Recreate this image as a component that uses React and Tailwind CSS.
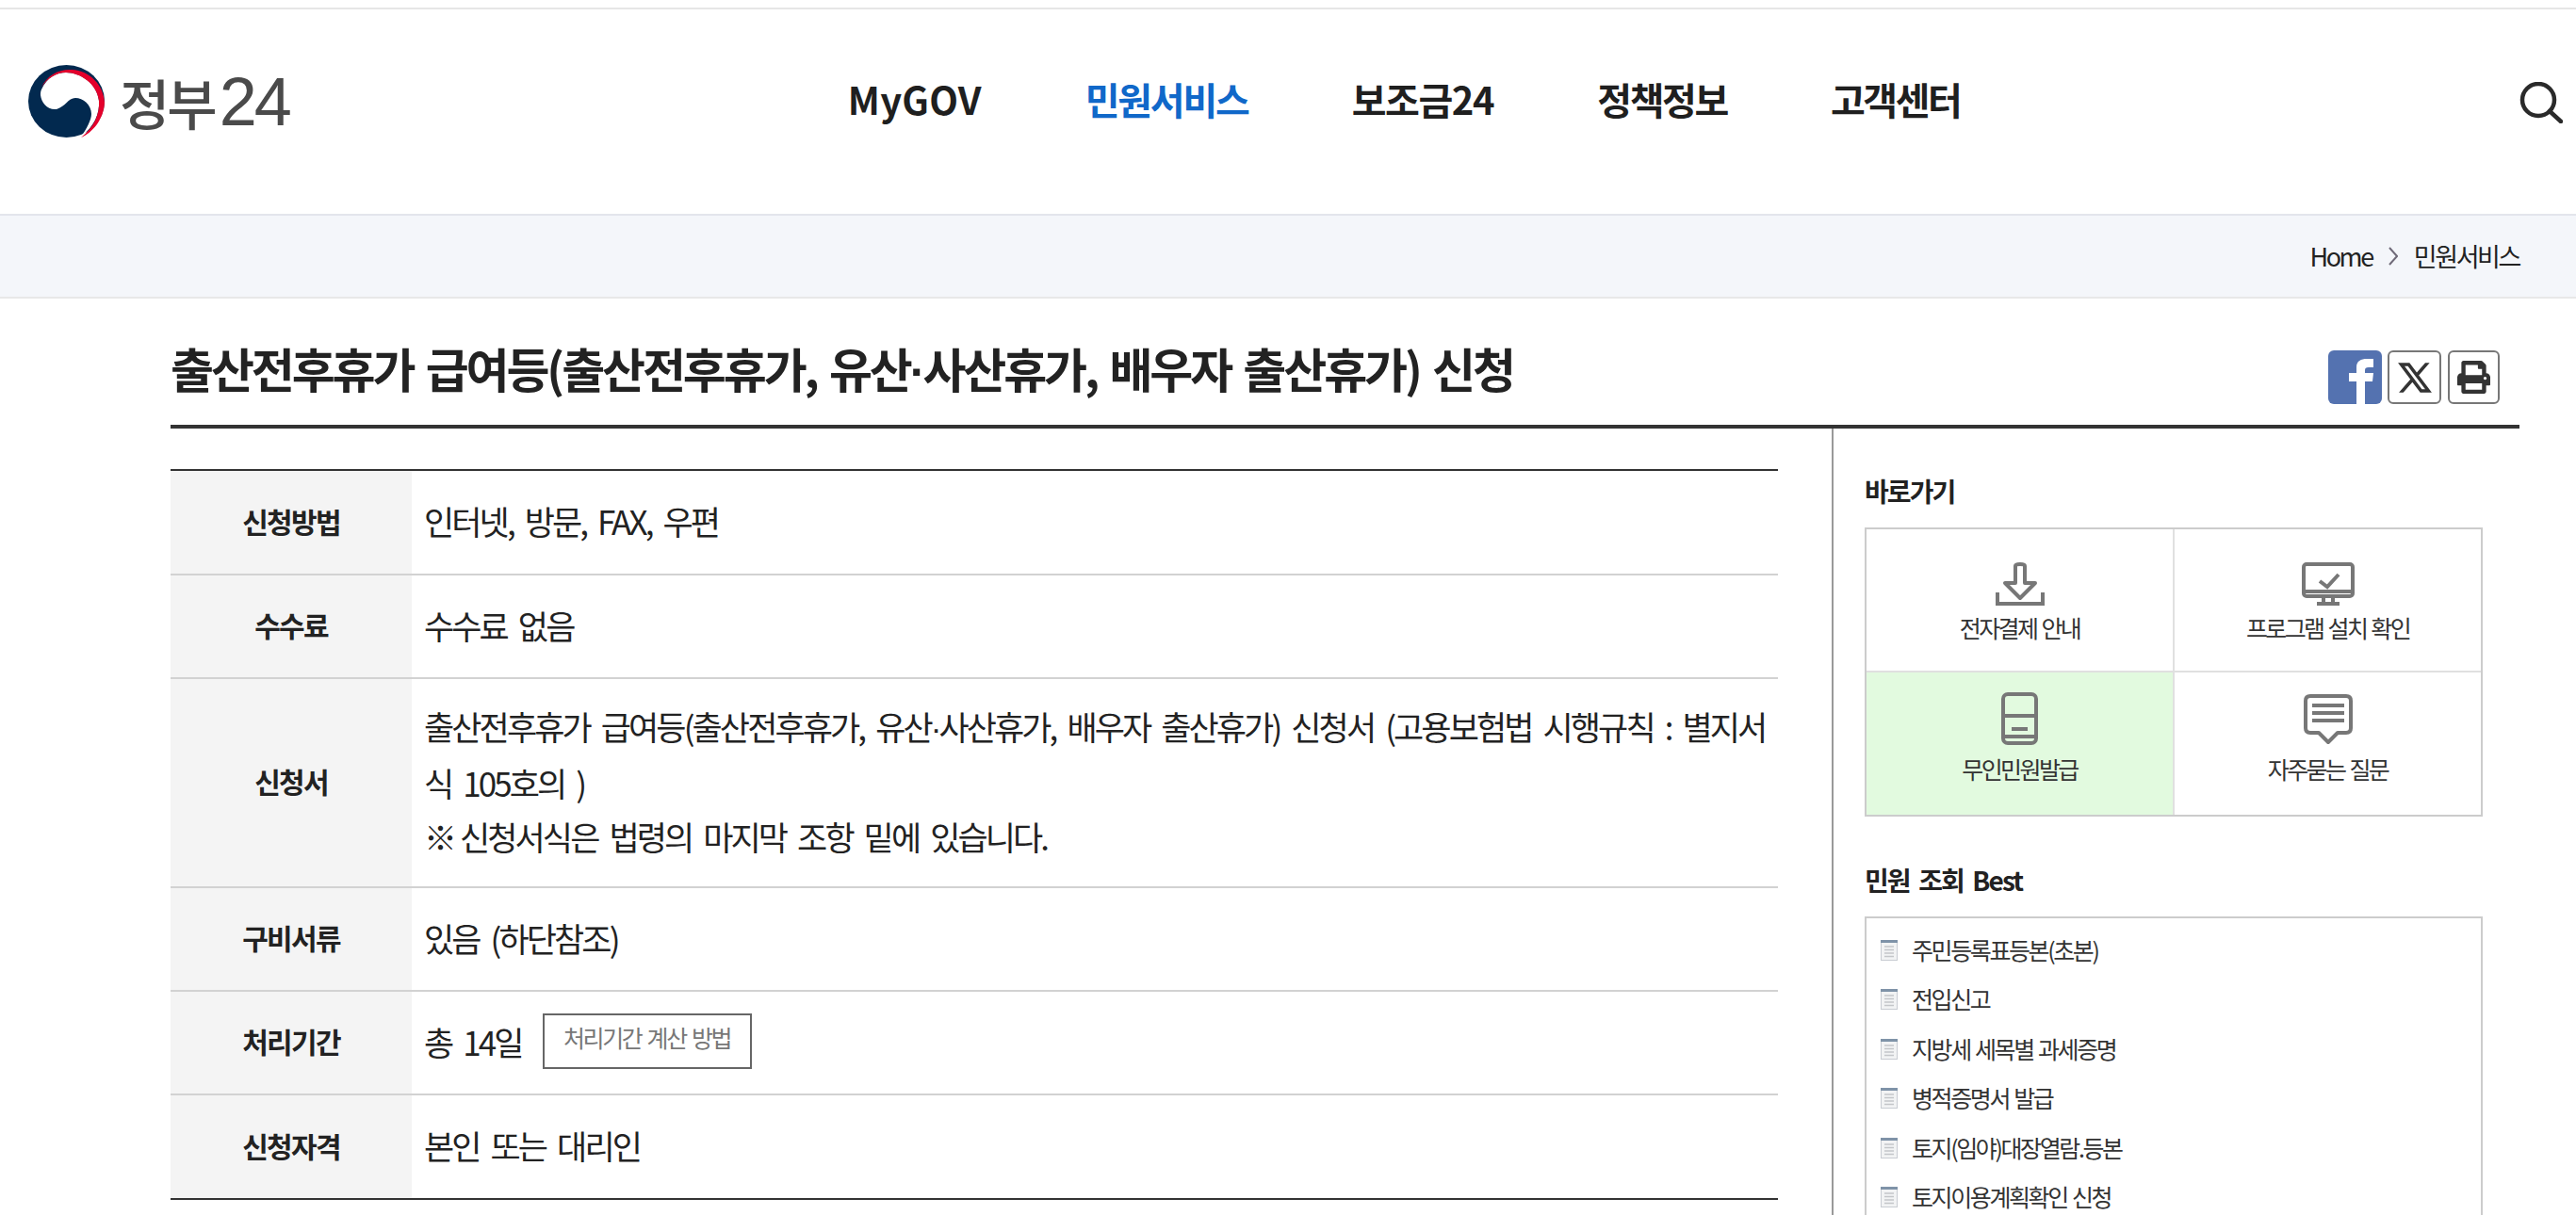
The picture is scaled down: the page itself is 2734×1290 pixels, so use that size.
import { FaPrint } from "react-icons/fa";
import { RiTwitterXLine } from "react-icons/ri";

const navItems = [
    { label: "MyGOV", className: "tracking-[0.2px] text-[#1f1f1f]" },
    { label: "민원서비스", className: "tracking-[-2.2px] text-[#1068c9]" },
    { label: "보조금24", className: "tracking-[-1.4px] text-[#1f1f1f]" },
    { label: "정책정보", className: "tracking-[-2.4px] text-[#1f1f1f]" },
    { label: "고객센터", className: "tracking-[-2.4px] text-[#1f1f1f]" },
];

const rows = [
    { label: "신청방법", height: "h-[111px]", body: "인터넷, 방문, FAX, 우편" },
    { label: "수수료", height: "h-[110px]", body: "수수료 없음" },
    {
        label: "신청서",
        height: "h-[222px]",
        body: (
            <>
                출산전후휴가 급여등(출산전후휴가, 유산<span className="font-['Liberation_Sans',sans-serif] tracking-[-3px]">·</span>사산휴가, 배우자 출산휴가) 신청서 (고용보험법 시행규칙 : 별지서
                <br />
                식 105호의 )
                <br />
                <span className="tracking-[-9px]">※</span> 신청서식은 법령의 마지막 조항 밑에 있습니다.
            </>
        ),
    },
    { label: "구비서류", height: "h-[110px]", body: "있음 (하단참조)" },
    {
        label: "처리기간",
        height: "h-[110px]",
        body: (
            <div className="flex items-center">
                <span>총 14일</span>
                <span className="ml-[22px] h-[59px] w-[222px] border-2 border-[#666] pt-[6px] text-center text-[25px] leading-[34px] tracking-[-2.4px] text-[#777] [word-spacing:3px]">
                    처리기간 계산 방법
                </span>
            </div>
        ),
    },
    { label: "신청자격", height: "h-[111px]", body: "본인 또는 대리인" },
];

const bestList = [
    "주민등록표등본(초본)",
    "전입신고",
    "지방세 세목별 과세증명",
    "병적증명서 발급",
    "토지(임야)대장열람.등본",
    "토지이용계획확인 신청",
];

function Logo() {
    return (
        <div className="flex items-center">
            <svg width="81" height="77" viewBox="0 0 81 77">
                <ellipse cx="40.5" cy="38.5" rx="40.5" ry="38.5" fill="#02294f" />
                <path
                    d="M14 26C20 13 30 8 40 8C56 8 73 20 75 38C76 52 70 65 56 76C62 68 67 58 67 52C67 42 58 35 50 35C42 35 40 44 30 47C20 48 14 40 13 32C13 30 13 28 14 26Z"
                    fill="#fff"
                />
                <path
                    d="M14 24C20 10 34 4 46 5C66 6 80 22 81 40C80 58 68 72 56 77C70 66 76 52 75 38C73 20 55 8 40 8C30 8 20 14 14 24Z"
                    fill="#e4002b"
                />
            </svg>
            <div className="ml-[16px] flex items-center text-[#4a4a4a]">
                <span className="text-[58px] leading-none font-medium tracking-[-3px]">정부</span>
                <span className="ml-[5px] font-['Liberation_Sans',sans-serif] text-[72px] leading-none tracking-[-3px]">24</span>
            </div>
        </div>
    );
}

function SearchIcon() {
    return (
        <svg width="46" height="44" viewBox="0 0 46 44" fill="none" stroke="#2a2a2a" strokeWidth="4.5">
            <circle cx="20" cy="19" r="17" />
            <path d="M32 31L44 42" strokeLinecap="round" />
        </svg>
    );
}

function DownloadIcon() {
    return (
        <svg width="52" height="46" viewBox="0 0 52 46" fill="none" stroke="#777" strokeWidth="4">
            <path d="M21 22V4Q21 2 26 2Q31 2 31 4V22H42L26 38L10 22Z" strokeLinejoin="round" />
            <path d="M2 32V44H50V32" />
        </svg>
    );
}

function MonitorIcon() {
    return (
        <svg width="56" height="46" viewBox="0 0 56 46" fill="none" stroke="#777" strokeWidth="4">
            <rect x="2" y="2" width="52" height="34" rx="3" />
            <path d="M2 31H54M19 20L27 26L39 13" />
            <path d="M23 37V44M33 37V44M16 44H40" />
        </svg>
    );
}

function KioskIcon() {
    return (
        <svg width="39" height="56" viewBox="0 0 39 56" fill="none" stroke="#777" strokeWidth="4">
            <rect x="2" y="2" width="35" height="52" rx="5" />
            <path d="M2 25H37M11 39H28M2 47H37" />
        </svg>
    );
}

function ChatIcon() {
    return (
        <svg width="52" height="54" viewBox="0 0 52 54" fill="none" stroke="#777" strokeWidth="4">
            <path d="M7 2H45Q50 2 50 7V36Q50 41 45 41H36L26 51L16 41H7Q2 41 2 36V7Q2 2 7 2Z" strokeLinejoin="round" />
            <path d="M9 12H43M9 20H43M9 28H43" />
        </svg>
    );
}

function DocIcon() {
    return (
        <svg width="18" height="22" viewBox="0 0 18 22" className="mt-[3px] shrink-0">
            <rect width="18" height="22" fill="#c8ccd2" />
            <rect x="1" y="3" width="16" height="18" fill="#f2f3f4" />
            <rect width="18" height="3" fill="#7f93a8" />
            <path d="M4 7H14M4 10.5H14M4 14H14M4 17.5H14" stroke="#c4c6c9" strokeWidth="1.5" />
        </svg>
    );
}

function ShortcutCell({ icon, label, className, labelClass }) {
    return (
        <div className={`flex flex-col items-center ${className}`}>
            <div className="flex h-[56px] items-end">{icon}</div>
            <p className={`${labelClass} text-[25px] leading-[30px] tracking-[-2.6px] text-[#333] [word-spacing:2px]`}>{label}</p>
        </div>
    );
}

export default function App() {
    return (
        <div className="h-[1290px] w-full overflow-hidden bg-white font-['Noto_Sans_CJK_KR','Liberation_Sans',sans-serif] text-[#222]">
            <div className="h-[10px] border-b-2 border-[#e6e6e6]" />

            <header className="flex h-[217px] items-center pr-[14px] pb-[22px] pl-[30px]">
                <Logo />
                <nav className="mb-[5px] ml-[593px] flex gap-[110px] text-[40px] leading-none font-bold">
                    {navItems.map((item) => (
                        <a key={item.label} className={item.className}>
                            {item.label}
                        </a>
                    ))}
                </nav>
                <div className="ml-auto pt-[2px]">
                    <SearchIcon />
                </div>
            </header>

            <div className="flex h-[90px] items-center justify-end border-t-2 border-b-2 border-t-[#e3e5ec] border-b-[#e8e8e8] bg-[#f4f6fa] pr-[60px] text-[27px] tracking-[-2.4px] text-[#222]">
                <span>Home</span>
                <svg width="10" height="20" viewBox="0 0 10 20" fill="none" stroke="#6f6a78" strokeWidth="2" className="mx-[17px]">
                    <path d="M1 1L9 10L1 19" />
                </svg>
                <span>민원서비스</span>
            </div>

            <div className="ml-[181px] mr-[60px]">
                <div className="flex h-[138px] justify-between border-b-4 border-[#333]">
                    <h1 className="pt-[40px] text-[50px] leading-[66px] font-bold tracking-[-3.1px] text-[#222] [word-spacing:5px]">
                        출산전후휴가 급여등(출산전후휴가, 유산<span className="font-['Liberation_Sans',sans-serif] tracking-[-3px]">·</span>사산휴가, 배우자 출산휴가) 신청
                    </h1>
                    <div className="flex pt-[55px] pr-[21px]">
                        <div className="h-[57px] w-[57px] rounded-md bg-[#5472b0]">
                            <svg width="57" height="57" viewBox="0 0 57 57">
                                <path d="M30 57V33H22V24H30V18C30 11 35 9 41 9H48V18H43C40 18 39 19 39 21V24H48L47 33H39V57Z" fill="#fff" />
                            </svg>
                        </div>
                        <div className="ml-[6px] flex h-[57px] w-[57px] items-center justify-center rounded-md border-2 border-[#777]">
                            <RiTwitterXLine size={42} color="#333" />
                        </div>
                        <div className="ml-[7px] flex h-[57px] w-[55px] items-center justify-center rounded-md border-2 border-[#777]">
                            <FaPrint size={35} color="#333" />
                        </div>
                    </div>
                </div>

                <div className="flex">
                    <div className="w-[1765px] border-r-2 border-[#999] pt-[43px] pb-[40px]">
                        <table className="w-[1706px] table-fixed border-t-2 border-[#333]">
                            <tbody>
                                {rows.map((row, index) => (
                                    <tr
                                        key={row.label}
                                        className={`${row.height} border-b-2 ${index === rows.length - 1 ? "border-[#333]" : "border-[#d2d2d2]"}`}
                                    >
                                        <th className="w-[256px] bg-[#f4f4f4] pb-[3px] text-center text-[30px] font-bold tracking-[-1.7px] text-[#222]">
                                            {row.label}
                                        </th>
                                        <td className="pr-[10px] pb-[4px] pl-[13px] text-[35px] leading-[57px] tracking-[-2.9px] text-[#222] [word-spacing:7px]">
                                            {row.body}
                                        </td>
                                    </tr>
                                ))}
                            </tbody>
                        </table>
                    </div>

                    <aside className="pt-[48px] pl-[33px]">
                        <h2 className="text-[28px] leading-[36px] font-bold tracking-[-1.9px] text-[#222]">바로가기</h2>
                        <div className="mt-[21px] grid h-[307px] w-[656px] grid-cols-[327px_1fr] grid-rows-2 border-2 border-[#ccc]">
                            <ShortcutCell
                                icon={<DownloadIcon />}
                                label="전자결제 안내"
                                labelClass="mt-[8px]"
                                className="border-r-2 border-b-2 border-[#e0e0e0] pt-[25px]"
                            />
                            <ShortcutCell
                                icon={<MonitorIcon />}
                                label="프로그램 설치 확인"
                                labelClass="mt-[8px]"
                                className="border-b-2 border-[#e0e0e0] pt-[25px]"
                            />
                            <ShortcutCell
                                icon={<KioskIcon />}
                                label="무인민원발급"
                                labelClass="mt-[10px]"
                                className="border-r-2 border-[#e0e0e0] bg-[#e2fadf] pt-[21px]"
                            />
                            <ShortcutCell icon={<ChatIcon />} label="자주묻는 질문" labelClass="mt-[10px]" className="pt-[21px]" />
                        </div>

                        <h2 className="mt-[49px] text-[28px] leading-[36px] font-bold tracking-[-1.9px] text-[#222] [word-spacing:5px]">민원 조회 Best</h2>
                        <div className="mt-[21px] h-[500px] w-[656px] border-2 border-[#ccc] pt-[20px] pl-[15px]">
                            <ul className="flex flex-col gap-[22.4px]">
                                {bestList.map((item) => (
                                    <li key={item} className="flex h-[30px] items-start gap-[15px] text-[25px] leading-[26px] tracking-[-2.4px] text-[#333] [word-spacing:2px]">
                                        <DocIcon />
                                        <span>{item}</span>
                                    </li>
                                ))}
                            </ul>
                        </div>
                    </aside>
                </div>
            </div>
        </div>
    );
}
